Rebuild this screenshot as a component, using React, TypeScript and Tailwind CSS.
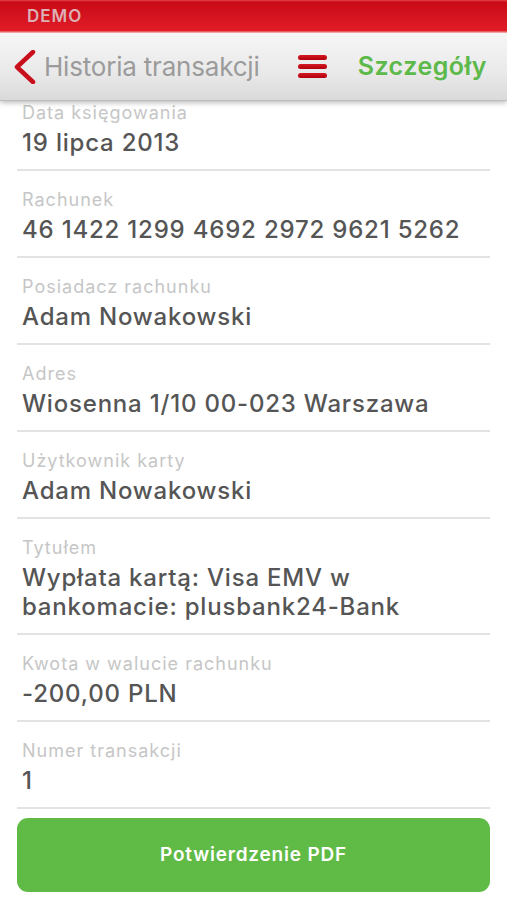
import React from "react";

const rows: { label: string; value: React.ReactNode }[] = [
  { label: "Data księgowania", value: "19 lipca 2013" },
  { label: "Rachunek", value: "46 1422 1299 4692 2972 9621 5262" },
  { label: "Posiadacz rachunku", value: "Adam Nowakowski" },
  { label: "Adres", value: "Wiosenna 1/10 00-023 Warszawa" },
  { label: "Użytkownik karty", value: "Adam Nowakowski" },
  {
    label: "Tytułem",
    value: (
      <>
        Wypłata kartą: Visa EMV w
        <br />
        bankomacie: plusbank24-Bank
      </>
    ),
  },
  { label: "Kwota w walucie rachunku", value: "-200,00 PLN" },
  { label: "Numer transakcji", value: "1" },
];

export default function App() {
  return (
    <div
      className="w-[507px] h-[900px] overflow-hidden bg-white"
      style={{ fontFamily: "Inter, 'Noto Sans', 'Liberation Sans', sans-serif" }}
    >
      {/* status/demo bar */}
      <div className="relative z-20 h-[33px] bg-[linear-gradient(to_bottom,#e4464d_0px,#c90a17_2px,#d41420_50%,#e11c27_31px,#f0a0a4_32px)] flex items-center pl-[27px]">
        <span className="text-[17px] font-semibold leading-none text-[#dcb0b4] tracking-[1px]">
          DEMO
        </span>
      </div>

      {/* navigation header */}
      <div className="relative z-10 h-[68px] bg-[linear-gradient(to_bottom,#f6f6f6,#e9e9e9_60%,#dadada)] border-b border-[#bdbdbd] shadow-[0_2px_5px_rgba(0,0,0,0.25)] flex items-center">
        <div className="flex items-center pl-[14px]">
          <svg width="22" height="34" viewBox="0 0 22 34" className="shrink-0">
            <path
              d="M19 2 L3 17 L19 32"
              fill="none"
              stroke="#c8101b"
              strokeWidth="4.5"
              strokeLinecap="round"
              strokeLinejoin="round"
            />
          </svg>
          <span className="ml-[8px] text-[26px] leading-none text-[#9b9b9b] tracking-[-0.2px]">
            Historia transakcji
          </span>
        </div>
        <div className="ml-[38px] flex flex-col gap-[4px] w-[29px]">
          <div className="h-[5px] rounded-full bg-[linear-gradient(to_bottom,#d41a22,#b0000c)]" />
          <div className="h-[5px] rounded-full bg-[linear-gradient(to_bottom,#d41a22,#b0000c)]" />
          <div className="h-[5px] rounded-full bg-[linear-gradient(to_bottom,#d41a22,#b0000c)]" />
        </div>
        <span className="ml-auto mr-[20px] text-[25px] leading-none font-semibold text-[#5cb94a] tracking-[0.5px]">
          Szczegóły
        </span>
      </div>

      {/* content */}
      <div className="-mt-[17px] px-[17px]">
        {rows.map((r, i) => (
          <div key={i} className="pt-[18px] pb-[12px] pl-[5px] border-b-2 border-[#e3e3e3]">
            <div className="text-[18px] leading-[22px] text-[#c6c6c6] tracking-[1px]">{r.label}</div>
            <div className="mt-[4px] text-[24px] leading-[29px] font-medium text-[#555555] tracking-[0.8px] whitespace-nowrap">
              {r.value}
            </div>
          </div>
        ))}
        <button className="mt-[9px] w-full h-[74px] rounded-[11px] bg-[#60ba46] text-white text-[19px] font-semibold tracking-[0.8px] flex items-center justify-center">
          Potwierdzenie PDF
        </button>
      </div>
    </div>
  );
}
